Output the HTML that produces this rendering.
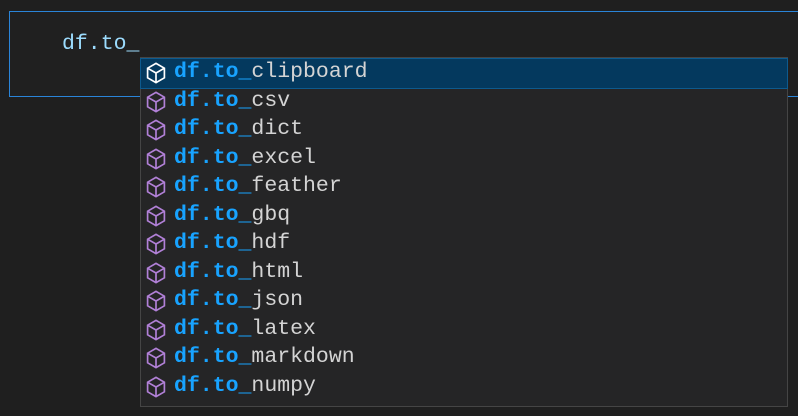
<!DOCTYPE html><html><head><style>
body{margin:0;width:798px;height:416px;background:#1f1f1f;overflow:hidden;position:relative;font-family:"Liberation Mono",monospace;}
.ed{position:absolute;left:9px;top:11px;width:800px;height:84px;border:1px solid #2a84d8;background:#202020;}
.code{position:absolute;left:62px;top:29px;font-size:21.5px;color:#9cdcfe;line-height:30px}
.w{position:absolute;left:140px;top:57px;width:646px;height:348px;background:#252526;border:1px solid #454545;}
.r{position:absolute;left:0;width:646px;height:28.5px;font-size:21.5px;line-height:28.5px;color:#d4d4d4}
.r.s{background:#04395e;outline:1px solid #0d5a8e}
.r svg{position:absolute;left:3px;top:2px}
.r span.t{position:absolute;left:33px;top:-1px;white-space:pre}
b{color:#18a3ff;font-weight:bold}
</style></head><body>
<div class="ed"></div>
<div class="code">df.to_</div>
<div class="w">
<div class="r s" style="top:1px"><svg width="24" height="24" viewBox="0 0 20 20" fill="none" stroke="#fff" stroke-width="1.4"><path d="M10 2L17 6V14L10 18L3 14V6Z M3 6L10 10L17 6 M10 10V18"/></svg><span class="t"><b>df.to_</b>clipboard</span></div>
<div class="r" style="top:29.5px"><svg width="24" height="24" viewBox="0 0 20 20" fill="none" stroke="#b180d7" stroke-width="1.4"><path d="M10 2L17 6V14L10 18L3 14V6Z M3 6L10 10L17 6 M10 10V18"/></svg><span class="t"><b>df.to_</b>csv</span></div>
<div class="r" style="top:58px"><svg width="24" height="24" viewBox="0 0 20 20" fill="none" stroke="#b180d7" stroke-width="1.4"><path d="M10 2L17 6V14L10 18L3 14V6Z M3 6L10 10L17 6 M10 10V18"/></svg><span class="t"><b>df.to_</b>dict</span></div>
<div class="r" style="top:86.5px"><svg width="24" height="24" viewBox="0 0 20 20" fill="none" stroke="#b180d7" stroke-width="1.4"><path d="M10 2L17 6V14L10 18L3 14V6Z M3 6L10 10L17 6 M10 10V18"/></svg><span class="t"><b>df.to_</b>excel</span></div>
<div class="r" style="top:115px"><svg width="24" height="24" viewBox="0 0 20 20" fill="none" stroke="#b180d7" stroke-width="1.4"><path d="M10 2L17 6V14L10 18L3 14V6Z M3 6L10 10L17 6 M10 10V18"/></svg><span class="t"><b>df.to_</b>feather</span></div>
<div class="r" style="top:143.5px"><svg width="24" height="24" viewBox="0 0 20 20" fill="none" stroke="#b180d7" stroke-width="1.4"><path d="M10 2L17 6V14L10 18L3 14V6Z M3 6L10 10L17 6 M10 10V18"/></svg><span class="t"><b>df.to_</b>gbq</span></div>
<div class="r" style="top:172px"><svg width="24" height="24" viewBox="0 0 20 20" fill="none" stroke="#b180d7" stroke-width="1.4"><path d="M10 2L17 6V14L10 18L3 14V6Z M3 6L10 10L17 6 M10 10V18"/></svg><span class="t"><b>df.to_</b>hdf</span></div>
<div class="r" style="top:200.5px"><svg width="24" height="24" viewBox="0 0 20 20" fill="none" stroke="#b180d7" stroke-width="1.4"><path d="M10 2L17 6V14L10 18L3 14V6Z M3 6L10 10L17 6 M10 10V18"/></svg><span class="t"><b>df.to_</b>html</span></div>
<div class="r" style="top:229px"><svg width="24" height="24" viewBox="0 0 20 20" fill="none" stroke="#b180d7" stroke-width="1.4"><path d="M10 2L17 6V14L10 18L3 14V6Z M3 6L10 10L17 6 M10 10V18"/></svg><span class="t"><b>df.to_</b>json</span></div>
<div class="r" style="top:257.5px"><svg width="24" height="24" viewBox="0 0 20 20" fill="none" stroke="#b180d7" stroke-width="1.4"><path d="M10 2L17 6V14L10 18L3 14V6Z M3 6L10 10L17 6 M10 10V18"/></svg><span class="t"><b>df.to_</b>latex</span></div>
<div class="r" style="top:286px"><svg width="24" height="24" viewBox="0 0 20 20" fill="none" stroke="#b180d7" stroke-width="1.4"><path d="M10 2L17 6V14L10 18L3 14V6Z M3 6L10 10L17 6 M10 10V18"/></svg><span class="t"><b>df.to_</b>markdown</span></div>
<div class="r" style="top:314.5px"><svg width="24" height="24" viewBox="0 0 20 20" fill="none" stroke="#b180d7" stroke-width="1.4"><path d="M10 2L17 6V14L10 18L3 14V6Z M3 6L10 10L17 6 M10 10V18"/></svg><span class="t"><b>df.to_</b>numpy</span></div>
</div>
</body></html>
